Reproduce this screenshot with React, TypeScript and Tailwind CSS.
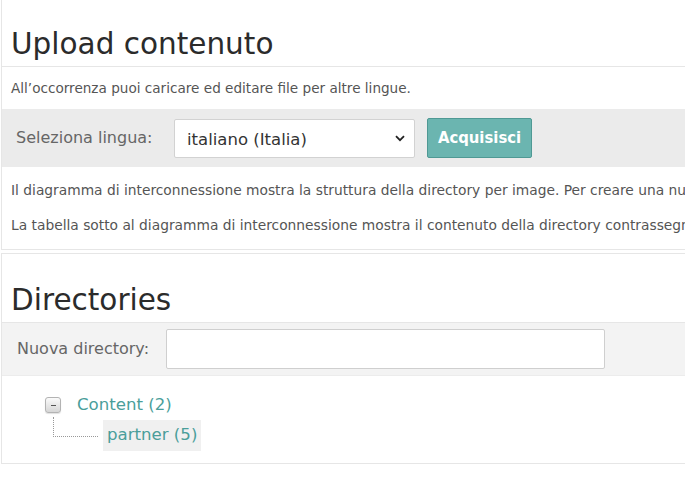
import React from 'react';

function TreeToggle() {
  return (
    <span className="inline-flex h-[16px] w-[16px] items-center justify-center rounded-[3px] border border-[#b3b3b3] bg-gradient-to-b from-[#fbfbfb] to-[#d6d6d6] shadow-[0_1px_1px_rgba(0,0,0,0.12)]">
      <span className="block h-px w-[5px] bg-[#555]" />
    </span>
  );
}

export default function App() {
  return (
    <div className="min-h-[497px] w-[685px] overflow-hidden bg-white text-[#444]" style={{ fontFamily: '"DejaVu Sans", Verdana, sans-serif' }}>
      {/* Upload panel */}
      <section className="ml-[1px] w-[760px] border-b border-l border-[#e6e6e6] pb-[14px]">
        <h2 className="border-b border-[#e6e6e6] px-[9px] pb-[4px] pt-[26px] text-[29.5px] leading-[36px] text-[#2b2b2b]">
          Upload contenuto
        </h2>
        <p className="px-[9px] py-[12px] text-[13.6px] leading-[18px] text-[#555]">
          All’occorrenza puoi caricare ed editare file per altre lingue.
        </p>
        <div className="flex items-center gap-[12px] bg-[#ebebeb] px-[14px] py-[9px]">
          <span className="w-[146px] text-[16px] text-[#666]">
            Seleziona lingua:
          </span>
          <div className="relative h-[39px] w-[241px] rounded-[2px] border border-[#d2d2d2] bg-white">
            <span className="absolute left-[12px] top-[8px] text-[16.5px] text-[#333]">
              italiano (Italia)
            </span>
            <svg className="absolute right-[9px] top-[15px]" width="10" height="7" viewBox="0 0 10 7">
              <path d="M1 1.2 5 5.2 9 1.2" fill="none" stroke="#222" strokeWidth="1.8" />
            </svg>
          </div>
          <button className="h-[40px] w-[105px] rounded-[2px] border border-[#4f9994] bg-[#6bb5b0] text-[16.5px] font-bold text-white" style={{ fontFamily: '"DejaVu Sans Condensed", "DejaVu Sans", sans-serif' }}>
            Acquisisci
          </button>
        </div>
        <div className="space-y-[15px] whitespace-nowrap px-[9px] pt-[13px] text-[13.8px] leading-[20px] text-[#555]">
          <p>Il diagramma di interconnessione mostra la struttura della directory per image. Per creare una nuova directory</p>
          <p>La tabella sotto al diagramma di interconnessione mostra il contenuto della directory contrassegnata</p>
        </div>
      </section>

      {/* Directories panel */}
      <section className="ml-[1px] mt-[3px] w-[760px] border-b border-l border-t border-[#e6e6e6]">
        <h2 className="border-b border-[#e6e6e6] px-[9px] pb-[4px] pt-[28px] text-[29.5px] leading-[36px] text-[#2b2b2b]">
          Directories
        </h2>
        <div className="flex items-center gap-[12px] bg-[#f3f3f3] px-[15px] py-[6px]">
          <span className="w-[137px] whitespace-nowrap text-[16px] text-[#666]">
            Nuova directory:
          </span>
          <input className="h-[40px] w-[439px] rounded-[2px] border border-[#cfcfcf] bg-white outline-none" />
        </div>
        <div className="border-t border-[#ececec] px-[43px] pb-[12px] pt-[18px] text-[16.6px] text-[#4a9e9a]">
          <div className="flex h-[22px] items-center gap-[16px]">
            <TreeToggle />
            <span>Content (2)</span>
          </div>
          <div className="mt-[4px] flex items-center">
            <span className="ml-[8px] mt-[-16px] block h-[20px] w-[45px] border-b border-l border-dotted border-[#999]" />
            <span className="ml-[5px] bg-[#f0f0f0] px-[4px] py-[3px]">partner (5)</span>
          </div>
        </div>
      </section>
    </div>
  );
}
